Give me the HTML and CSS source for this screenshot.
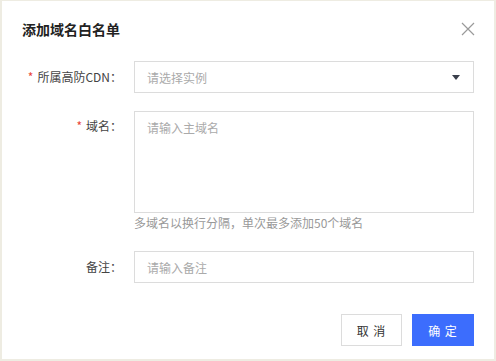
FILE: index.html
```html
<!DOCTYPE html>
<html lang="zh">
<head>
<meta charset="utf-8">
<link rel="stylesheet" href="styles.css">
</head>
<body>
<div class="frame">
  <div class="dialog">
    <div class="header">
      <div class="title">添加域名白名单</div>
      <svg class="close" width="14" height="14" viewBox="0 0 14 14"><path d="M1 1L13 13M13 1L1 13" stroke="#9a9a9a" stroke-width="1.2" fill="none"/></svg>
    </div>
    <div class="form">
      <div class="row row-mid">
        <div class="label"><span class="req">*</span>所属高防CDN：</div>
        <div class="field">
          <div class="input select"><span class="ph">请选择实例</span><svg class="caret" width="8" height="5" viewBox="0 0 8 5"><path d="M0 0H8L4 5Z" fill="#3a3f4b"/></svg></div>
        </div>
      </div>
      <div class="row row-top">
        <div class="label label-top"><span class="req">*</span>域名：</div>
        <div class="field">
          <div class="input textarea"><span class="ph">请输入主域名</span></div>
          <div class="help">多域名以换行分隔，单次最多添加50个域名</div>
        </div>
      </div>
      <div class="row row-mid">
        <div class="label">备注：</div>
        <div class="field">
          <div class="input"><span class="ph">请输入备注</span></div>
        </div>
      </div>
    </div>
    <div class="footer">
      <div class="btn btn-cancel">取 消</div>
      <div class="btn btn-ok">确 定</div>
    </div>
  </div>
</div>
</body>
</html>
```

FILE: styles.css
```css
* { box-sizing: border-box; }
html, body { margin: 0; padding: 0; }
body {
  font-family: "Noto Sans CJK SC", "Noto Sans", sans-serif;
  font-size: 12px;
  color: #333;
  background: #fff;
}
.frame {
  width: 496px;
  height: 361px;
  border-style: solid;
  border-color: #eeece2;
  border-width: 1px 2px 2px 2px;
  background: #fff;
}
.dialog {
  padding: 0 20px 0 20px;
}
.header {
  display: flex;
  align-items: center;
  justify-content: space-between;
  height: 56px;
}
.title {
  font-size: 14px;
  font-weight: bold;
  color: #222;
  line-height: 20px;
  margin-top: -1px;
}
.close {
  margin-right: -1px;
}
.form {
  display: flex;
  flex-direction: column;
  margin-top: 4px;
}
.row {
  display: flex;
  gap: 12px;
}
.row-mid { align-items: center; }
.row + .row { margin-top: 18px; }
.row-top + .row { margin-top: 19px; }
.label {
  width: 100px;
  text-align: right;
  color: #444;
  line-height: 20px;
  white-space: nowrap;
}
.label-top { padding-top: 5px; }
.req { color: #e9463a; margin-right: 4px; }
.field { flex: 1; }
.input {
  height: 32px;
  border: 1px solid #dcdcdc;
  display: flex;
  align-items: center;
  padding: 0 12px;
}
.ph { color: #aaa; }
.select { justify-content: space-between; padding-right: 13px; }
.caret { margin-top: 1px; }
.textarea {
  height: 102px;
  align-items: flex-start;
  padding-top: 6px;
  line-height: 20px;
}
.help {
  color: #999;
  margin-top: 1px;
  line-height: 18px;
}
.footer {
  display: flex;
  justify-content: flex-end;
  gap: 10px;
  margin-top: 31px;
}
.btn {
  height: 32px;
  width: 61px;
  display: flex;
  align-items: center;
  justify-content: center;
  font-size: 12px;
  letter-spacing: 1px;
}
.btn-cancel {
  border: 1px solid #dcdcdc;
  color: #333;
}
.btn-ok {
  background: #3c6dfd;
  color: #fff;
  width: 62px;
}
```
